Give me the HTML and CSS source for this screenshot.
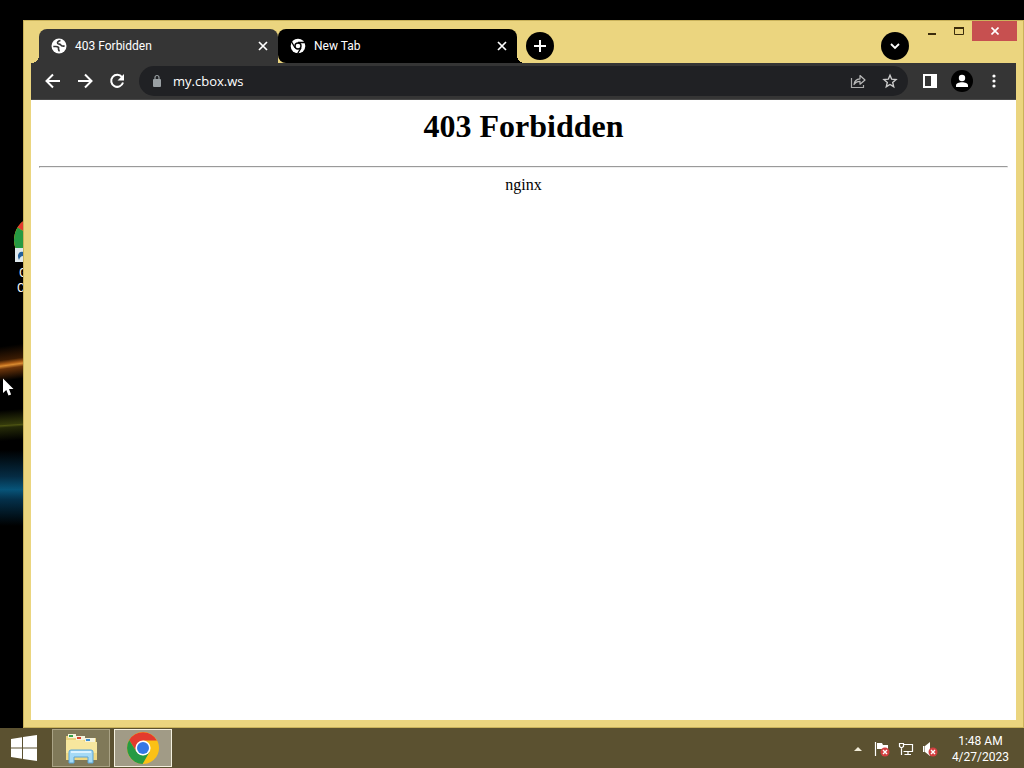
FILE: index.html
```html
<!DOCTYPE html>
<html lang="en">
<head>
<meta charset="utf-8">
<title>403 Forbidden</title>
<link rel="stylesheet" href="styles.css">
</head>
<body>
<div class="screen">
  <main class="desktop">
    <div class="shortcut">
      <svg class="shortcut-icon" viewBox="0 0 48 48" width="48" height="48" aria-hidden="true">
        <circle cx="24" cy="22" r="24" fill="#fbc116"/>
        <path d="M24 22 3.500 9.500A24 24 0 0 1 44.500 9.500Z" fill="#e33b2e"/>
        <path d="M24 22 3.500 9.500A24 24 0 0 0 24 46Z" fill="#269a43"/>
        <path d="M1 30h15v14H1z" fill="#dfe9ee"/>
        <path d="M5 42c-3-6 1-9 4-8v-3l6 5-6 5v-3c-2 0-3 1-4 4z" fill="#225f9c"/>
      </svg>
      <span>Google</span><span>Chrome</span>
    </div>

    <section class="window">
      <header class="titlebar">
        <div class="tabs">
          <div class="tab tab-active">
            <svg width="16" height="16" viewBox="0 0 16 16" aria-hidden="true">
              <circle cx="8" cy="8" r="7.500" fill="#fff"/>
              <path d="M9.500 2.500C7 3 6 4.200 6.800 5.500c.8 1 2.500.3 3 1.500.5 1.200 2 1 3.800 1.200M2.300 8.500H5c2 0 3 1 2.500 2-.5.700.7 1 .5 2.800" fill="none" stroke="#353535" stroke-width="1.700"/>
            </svg>
            <span class="tab-title">403 Forbidden</span>
            <button class="tab-close" aria-label="Close tab"><svg width="10" height="10" viewBox="0 0 10 10"><path d="m1 1 8 8M9 1 1 9" stroke="#fff" stroke-width="1.700"/></svg></button>
          </div>
          <div class="tab tab-dark">
            <svg width="16" height="16" viewBox="0 0 16 16" aria-hidden="true">
              <circle cx="8" cy="8" r="7.300" fill="#fff"/>
              <circle cx="8" cy="8" r="3.700" fill="#000"/>
              <circle cx="8" cy="8" r="2.300" fill="#fff"/>
              <path d="M8 4.500h7M5 9.800 1.500 3.700M11 9.800 7.500 15.800" stroke="#000" stroke-width="1.300"/>
            </svg>
            <span class="tab-title">New Tab</span>
            <button class="tab-close" aria-label="Close tab"><svg width="10" height="10" viewBox="0 0 10 10"><path d="m1 1 8 8M9 1 1 9" stroke="#fff" stroke-width="1.700"/></svg></button>
          </div>
        </div>
        <button class="round" aria-label="New tab"><svg width="14" height="14" viewBox="0 0 14 14"><path d="M7 1v12M1 7h12" stroke="#fff" stroke-width="2"/></svg></button>
        <button class="round search-tabs" aria-label="Search tabs"><svg width="12" height="12" viewBox="0 0 12 12"><path d="m2 4 4 4 4-4" fill="none" stroke="#fff" stroke-width="1.800"/></svg></button>
        <div class="controls">
          <button class="control" aria-label="Minimize"><svg width="10" height="12" viewBox="0 0 10 12"><path d="M1 8h8v2H1z" fill="#3b2c0c"/></svg></button>
          <button class="control" aria-label="Maximize"><svg width="10" height="8" viewBox="0 0 10 8"><path d="M.5 1h9v6.500h-9z" fill="none" stroke="#3b2c0c"/><path d="M0 0h10v2H0z" fill="#3b2c0c"/></svg></button>
          <button class="control control-close" aria-label="Close"><svg width="8" height="8" viewBox="0 0 8 8"><path d="m.5.500 7 7M7.500.500l-7 7" stroke="#fff" stroke-width="1.600"/></svg></button>
        </div>
      </header>

      <nav class="toolbar">
        <button class="tool" aria-label="Back"><svg width="16" height="16" viewBox="0 0 16 16"><path d="M15 8H2M8 1.500 1.500 8 8 14.500" fill="none" stroke="#fff" stroke-width="2"/></svg></button>
        <button class="tool" aria-label="Forward"><svg width="16" height="16" viewBox="0 0 16 16"><path d="M1 8h13M8 1.500 14.500 8 8 14.500" fill="none" stroke="#fff" stroke-width="2"/></svg></button>
        <button class="tool" aria-label="Reload"><svg width="16" height="16" viewBox="0 0 16 16"><path d="M13 4.200A6 6 0 1 0 14 9.500" fill="none" stroke="#fff" stroke-width="2"/><path d="M15 1v6.500H8.500z" fill="#fff"/></svg></button>
        <div class="omnibox">
          <svg width="10" height="14" viewBox="0 0 10 14" aria-hidden="true"><path d="M2 5h6q1 0 1 1v6q0 1-1 1H2q-1 0-1-1V6q0-1 1-1z" fill="#9aa0a3"/><path d="M3 5.500V3.500a2 2 0 0 1 4 0v2" fill="none" stroke="#9aa0a3" stroke-width="1.200"/></svg>
          <input class="address" type="text" aria-label="Address" value="my.cbox.ws">
          <button class="tool" aria-label="Share"><svg width="16" height="16" viewBox="0 0 16 16"><path d="M1.500 5v9.500h12V12" fill="none" stroke="#aaa" stroke-width="1.200"/><path d="M4 11.500c.5-4 2.500-5.500 6-5.700V2.500L15 7l-5 4.200V8.300c-2.800 0-4.500.8-6 3.200z" fill="none" stroke="#bbb" stroke-width="1.200" stroke-linejoin="round"/></svg></button>
          <button class="tool" aria-label="Bookmark"><svg width="16" height="16" viewBox="0 0 16 16"><path d="m8 2.200 1.700 4 4.300.4-3.300 2.800 1 4.300L8 11.500l-3.700 2.200 1-4.300L2 6.600l4.300-.4z" fill="none" stroke="#ccc" stroke-width="1.400"/></svg></button>
        </div>
        <button class="tool" aria-label="Side panel"><svg width="14" height="14" viewBox="0 0 14 14"><path d="M0 0h14v14H0zM2 2v10h6V2z" fill="#fff" fill-rule="evenodd"/></svg></button>
        <button class="tool" aria-label="Profile"><svg width="22" height="22" viewBox="0 0 22 22"><circle cx="11" cy="11" r="11" fill="#000"/><circle cx="11" cy="8" r="3.200" fill="#fff"/><path d="M5 17v-1.500c0-2 3-3.200 6-3.200s6 1.200 6 3.200V17z" fill="#fff"/></svg></button>
        <button class="tool" aria-label="Menu"><svg width="4" height="14" viewBox="0 0 4 14"><g fill="#fff"><circle cx="2" cy="2" r="1.600"/><circle cx="2" cy="7" r="1.600"/><circle cx="2" cy="12" r="1.600"/></g></svg></button>
      </nav>

      <article class="page">
        <h1>403 Forbidden</h1>
        <hr>
        <p>nginx</p>
      </article>
    </section>

    <svg class="cursor" width="12" height="19" viewBox="0 0 12 19" aria-hidden="true"><path d="M1 .500v14.500l3.300-3 2.200 5.500 2.600-1L7 11h4.500z" fill="#fff"/></svg>
  </main>

  <footer class="taskbar">
    <button class="start" aria-label="Start"><svg width="26" height="26" viewBox="0 0 26 26"><path d="M0 4 11 2.200V12.500H0zM12 2 26 0v12.500H12zM0 13.500h11v10.300L0 22zM12 13.500h14V26l-14-2z" fill="#fff"/></svg></button>
    <button class="app" aria-label="File Explorer">
      <svg width="34" height="32" viewBox="0 0 34 32">
        <path d="M2 4h10l2 2h18v22H2z" fill="#ead27c"/>
        <path d="M4 2h8v4H4zM12 4h9v4h-9zM21 6h10v4H21z" fill="#f6f3dc"/>
        <path d="M5 3h4v2H5z" fill="#35a04a"/>
        <path d="M13 5h4v2h-4z" fill="#d8452f"/>
        <path d="M22 7h4v2h-4z" fill="#3d8ed0"/>
        <path d="M2 8h17l2 2h12v18H2z" fill="#f7e79e"/>
        <path d="M2 21h31v7H2z" fill="#efd883"/>
        <path d="M5 31V20q0-2 2-2h20q2 0 2 2v11h-5v-6H10v6z" fill="#a5daf6" stroke="#5aa5d6"/>
        <path d="M7 20h20" stroke="#dcf3ff" stroke-width="2"/>
      </svg>
    </button>
    <button class="app app-active" aria-label="Google Chrome">
      <svg width="32" height="32" viewBox="0 0 32 32">
        <circle cx="16" cy="16" r="16" fill="#fbc116"/>
        <path d="M16 8.500h13.900A16 16 0 0 0 2.200 8L9.500 19.700z" fill="#e33b2e"/>
        <path d="M2.200 8A16 16 0 0 0 15.600 32l7-12.200L16 23.500l-6.500-3.700z" fill="#269a43"/>
        <circle cx="16" cy="16" r="7.600" fill="#fff"/>
        <circle cx="16" cy="16" r="6" fill="#3478e5"/>
      </svg>
    </button>
    <div class="tray">
      <svg width="8" height="4" viewBox="0 0 8 4" aria-hidden="true"><path d="m0 4 4-4 4 4z" fill="#f1ecd8"/></svg>
      <svg width="16" height="16" viewBox="0 0 16 16" aria-hidden="true"><path d="M1.500 1v14" stroke="#fff" stroke-width="1.200"/><path d="M3 2h5l1 2h5v6H9L8 8H3z" fill="#fff"/><circle cx="11" cy="11" r="4.500" fill="#d33f40"/><path d="m9 9 4 4m0-4-4 4" stroke="#fff" stroke-width="1.400"/></svg>
      <svg width="16" height="16" viewBox="0 0 16 16" aria-hidden="true"><path d="M6 3.500h8.500v7H5.500M10 10.500v3M6.500 13.500H13M3.500 7v7M1.500 2.500h4v3l-2 1.500-2-1.500z" fill="none" stroke="#fff" stroke-width="1.200"/></svg>
      <svg width="16" height="16" viewBox="0 0 16 16" aria-hidden="true"><path d="M1 5h1.500v6H1zM3 5l5-4v14l-5-4z" fill="#fff"/><circle cx="11" cy="11" r="4.500" fill="#d33f40"/><path d="m9 9 4 4m0-4-4 4" stroke="#fff" stroke-width="1.400"/></svg>
      <div class="clock"><span>1:48 AM</span><span>4/27/2023</span></div>
    </div>
  </footer>
</div>
</body>
</html>
```
FILE: styles.css
```css
* { box-sizing: border-box; }

body {
  margin: 0;
  font: 12px/16px Roboto, "Open Sans", sans-serif;
}

button {
  display: grid;
  place-items: center;
  padding: 0;
  border: 0;
  background: none;
}

svg { display: block; flex: none; }

.screen {
  display: flex;
  flex-direction: column;
  height: 100vh;
  overflow: hidden;
}

/* Desktop */
.desktop {
  position: relative;
  flex: 1;
  background:
    linear-gradient(172deg, transparent 20%, #3a1b03 42%, #a85a14 48%, #d98a30 51%, #6b340a 56%, transparent 75%) 0 334px / 24px 60px no-repeat,
    linear-gradient(176deg, transparent 20%, #343a0b 48%, #4d5312 50%, #252a08 54%, transparent 80%) 0 400px / 24px 50px no-repeat,
    linear-gradient(transparent, #052c44 35%, #075479 52%, #04304a 65%, transparent) 0 450px / 24px 76px no-repeat,
    #000;
}

.shortcut {
  position: absolute;
  top: 218px;
  left: 15px;
  display: flex;
  flex-direction: column;
  align-items: center;
  width: 46px;
  color: #fff;
}

.shortcut span { line-height: 15px; }

.cursor { position: absolute; top: 378px; left: 2px; }

/* Browser window */
.window {
  position: absolute;
  inset: 20px 0 0 23px;
  display: flex;
  flex-direction: column;
  padding: 0 7px 7px;
  background: #ebd57f;
  border: 1px solid #c9b25b;
}

.titlebar { display: flex; height: 42px; }

.tabs {
  display: flex;
  align-items: flex-end;
  padding-left: 8px;
}

.tab {
  position: relative;
  display: flex;
  align-items: center;
  gap: 8px;
  width: 239px;
  height: 34px;
  padding: 0 9px 0 12px;
  color: #fff;
}

.tab-active { background: #353535; border-radius: 8px 8px 0 0; }
.tab-dark { background: #000; border-radius: 8px 8px 0 8px; }

.tab-active::before,
.tab-dark::after {
  content: "";
  position: absolute;
  bottom: 0;
  width: 8px;
  height: 8px;
}

.tab-active::before {
  right: 100%;
  background: radial-gradient(circle at 0 0, transparent 8px, #353535 8px);
}

.tab-dark::after {
  left: 100%;
  background: radial-gradient(circle at 100% 0, transparent 8px, #000 8px);
}

.tab-title { flex: 1; }
.tab-close { width: 12px; height: 16px; }

.round {
  width: 28px;
  height: 28px;
  margin: 11px 0 0 9px;
  border-radius: 50%;
  background: #000;
}

.search-tabs { margin-left: auto; }

.controls { display: flex; margin: 0 -1px 0 9px; }
.control { width: 27px; height: 20px; }
.control-close { width: 45px; background: #c75050; }

.toolbar {
  display: flex;
  align-items: center;
  height: 37px;
  padding: 0 6px;
  background: #353535;
  border-bottom: 1px solid #4a4a4a;
}

.tool { width: 32px; height: 28px; }

.omnibox {
  display: flex;
  flex: 1;
  align-items: center;
  height: 30px;
  margin: 0 6px;
  padding: 0 2px 0 13px;
  border-radius: 15px;
  background: #202124;
}

.address {
  flex: 1;
  min-width: 0;
  padding: 0 0 0 11px;
  border: 0;
  outline: 0;
  background: none;
  color: #fff;
  font: 13px/20px "Open Sans", "Noto Sans", sans-serif;
}

.page {
  flex: 1;
  padding: 8px;
  background: #fff;
  color: #000;
  font: 16px/18px "Liberation Serif", serif;
  text-align: center;
}

.page h1 { margin: 0 0 21px; font-size: 32px; line-height: 37px; }
.page hr { margin: 8px 0; }
.page p { margin: 0; }

/* Taskbar */
.taskbar {
  display: flex;
  align-items: center;
  height: 40px;
  background: #5b5130;
}

.start { width: 48px; height: 40px; }

.app {
  width: 58px;
  height: 38px;
  margin-left: 4px;
  border: 1px solid #aaa386;
  background: #807959;
}

.app-active { border-color: #f4f0df; background: #a19b86; }

.tray {
  display: flex;
  align-items: center;
  gap: 8px;
  margin-left: auto;
  padding: 2px 15px 0 0;
  color: #fff;
}

.tray svg:first-child { margin-right: 4px; }

.clock {
  display: flex;
  flex-direction: column;
  align-items: center;
  margin-left: 6px;
}
```
